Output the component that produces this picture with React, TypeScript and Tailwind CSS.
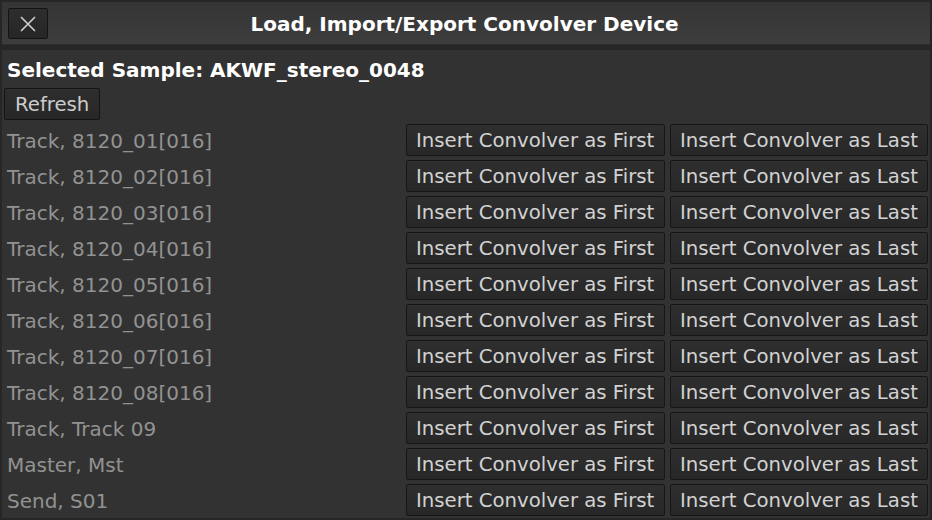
import React from "react";

const tracks = [
  "Track, 8120_01[016]",
  "Track, 8120_02[016]",
  "Track, 8120_03[016]",
  "Track, 8120_04[016]",
  "Track, 8120_05[016]",
  "Track, 8120_06[016]",
  "Track, 8120_07[016]",
  "Track, 8120_08[016]",
  "Track, Track 09",
  "Master, Mst",
  "Send, S01",
];

const btn =
  "h-8 flex items-center pt-[2px] border border-[#161616] rounded-[2px] bg-gradient-to-b from-[#2f2f2f] to-[#272727] text-[#d2d2d2] text-[19.7px] leading-none whitespace-nowrap overflow-hidden";

export default function App() {
  return (
    <div
      className="w-[932px] h-[520px] bg-[#262626] p-[2px] flex flex-col gap-[5px] overflow-hidden"
      style={{ fontFamily: '"DejaVu Sans", sans-serif' }}
    >
      <div className="h-[43px] shrink-0 relative flex items-center justify-center bg-gradient-to-b from-[#353535] to-[#3d3d3d] border-b border-[#2e2e2e]">
        <button className="absolute left-[6px] top-[6px] w-[40px] h-[31px] border border-[#141414] rounded-[2px] bg-gradient-to-b from-[#2e2e2e] to-[#262626] flex items-center justify-center">
          <svg width="18" height="18" viewBox="0 0 18 18">
            <path d="M2 2 L16 16 M16 2 L2 16" stroke="#cfcfcf" strokeWidth="1.6" />
          </svg>
        </button>
        <div className="text-white font-bold text-[20px] leading-none pt-[2px] pr-[3px]">
          Load, Import/Export Convolver Device
        </div>
      </div>
      <div className="flex-1 bg-[#323232] flex flex-col px-[2px]">
        <div className="h-[38px] flex items-center pl-[3px] text-white font-bold text-[20px] leading-none pt-[2px] whitespace-nowrap">
          Selected Sample: AKWF_stereo_0048
        </div>
        <div className="flex">
          <button className="h-[32px] w-[96px] pl-[10px] pt-[2px] text-left border border-[#141414] rounded-[2px] bg-gradient-to-b from-[#2e2e2e] to-[#272727] text-[#cccccc] text-[19.7px] leading-none">
            Refresh
          </button>
        </div>
        <div className="flex flex-col mt-[2px]">
          {tracks.map((t) => (
            <div key={t} className="h-9 flex items-center">
              <div className="flex-1 pl-[3px] pt-[2px] text-[#929292] text-[20px] leading-none whitespace-nowrap">{t}</div>
              <div className={btn + " w-[259px] pl-[9px]"}>Insert Convolver as First</div>
              <div className={btn + " w-[258px] ml-[5px] pl-[9px]"}>Insert Convolver as Last</div>
            </div>
          ))}
        </div>
      </div>
    </div>
  );
}
